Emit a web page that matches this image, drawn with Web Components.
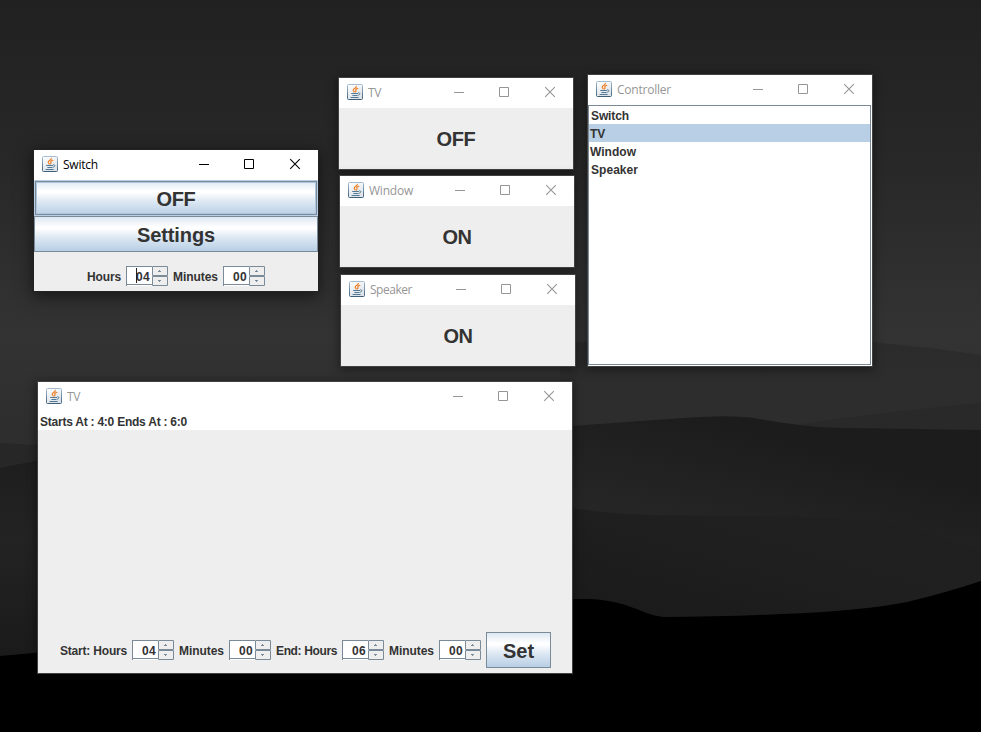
<!DOCTYPE html>
<html lang="en"><head><meta charset="utf-8"><title>Home controller</title>
<style>html,body{margin:0;width:981px;height:732px;overflow:hidden;background:#000}</style></head>
<body>
<home-desktop>
<app-window caption="Switch" active style="left:34px;top:150px;width:284px;height:141px">
<metal-button focused style="height:36px"><fit-text w="39">OFF</fit-text></metal-button><metal-button style="height:36px"><fit-text w="78">Settings</fit-text></metal-button>
<form-row style="padding:14px 0 0 53px"><fit-text w="34">Hours</fit-text><metal-spinner caret>04</metal-spinner><fit-text w="45">Minutes</fit-text><metal-spinner>00</metal-spinner></form-row>
</app-window>
<app-window caption="TV" style="left:339px;top:78px;width:234px;height:91px"><state-label><fit-text w="39">OFF</fit-text></state-label></app-window>
<app-window caption="Window" style="left:340px;top:176px;width:234px;height:91px"><state-label><fit-text w="29">ON</fit-text></state-label></app-window>
<app-window caption="Speaker" style="left:341px;top:275px;width:234px;height:91px"><state-label><fit-text w="29">ON</fit-text></state-label></app-window>
<app-window caption="Controller" style="left:588px;top:75px;width:284px;height:291px"><device-list items="Switch:38,TV:15,Window:46,Speaker:47" selected="TV"></device-list></app-window>
<app-window caption="TV" style="left:38px;top:382px;width:534px;height:291px">
<status-line><fit-text w="147">Starts At : 4:0 Ends At : 6:0</fit-text></status-line>
<form-row style="padding:202px 0 0 22px"><fit-text w="67">Start: Hours</fit-text><metal-spinner>04</metal-spinner><fit-text w="45">Minutes</fit-text><metal-spinner>00</metal-spinner><fit-text w="61">End: Hours</fit-text><metal-spinner>06</metal-spinner><fit-text w="45">Minutes</fit-text><metal-spinner>00</metal-spinner><metal-button style="width:65px;height:36px"><fit-text w="31">Set</fit-text></metal-button></form-row>
</app-window>
</home-desktop>
<script>
function define(name, html, init) {
  const t = document.createElement('template');
  t.innerHTML = html;
  customElements.define(name, class extends HTMLElement {
    connectedCallback() {
      if (this.shadowRoot) return;
      this.attachShadow({mode: 'open'}).appendChild(t.content.cloneNode(true));
      if (init) init(this, this.shadowRoot);
    }
  });
}
define('home-desktop', `<style>
:host{display:block;position:relative;width:981px;height:732px;overflow:hidden;color:#333;font:bold 12px "Liberation Sans",Arial,sans-serif}
svg{display:block}</style>
<svg width="981" height="732" viewBox="0 0 981 732">
<defs><linearGradient id="sky" x2="0" y2="1"><stop offset="0" stop-color="#212121"/><stop offset=".2" stop-color="#272727"/><stop offset=".46" stop-color="#333"/><stop offset=".58" stop-color="#2e2e2e"/></linearGradient>
<linearGradient id="a" x2="0" y2="1"><stop stop-color="#2b2b2b"/><stop offset=".4" stop-color="#2d2d2d"/><stop offset="1" stop-color="#2d2d2d"/></linearGradient>
<linearGradient id="b" gradientUnits="userSpaceOnUse" x1="700" y1="415" x2="670" y2="530"><stop stop-color="#1c1c1c"/><stop offset="1" stop-color="#262626"/></linearGradient>
<linearGradient id="c" gradientUnits="userSpaceOnUse" x1="700" y1="515" x2="670" y2="620"><stop stop-color="#202020"/><stop offset="1" stop-color="#1b1b1b"/></linearGradient>
<linearGradient id="d" x2="0" y2="1"><stop stop-color="#1e1e1e"/><stop offset=".4" stop-color="#232323"/><stop offset="1" stop-color="#1a1a1a"/></linearGradient></defs>
<rect width="981" height="732" fill="url(#sky)"/>
<path d="M560 342H872L930 348L981 355V450H560Z" fill="url(#a)"/>
<path d="M0 443Q50 447 60 442V500H0Z" fill="#272727"/>
<path d="M802 424Q890 411 981 403V440H802Z" fill="#292929"/>
<path d="M300 440L572 426Q650 420 700 417Q732 415 754 418Q810 428 850 428L981 430V620H300Z" fill="url(#b)"/>
<path d="M300 508H572Q610 514 657 515L813 517Q865 518 888 522C930 530 950 541 981 550V660H300Z" fill="url(#c)"/>
<path d="M0 468L45 459H300V660H0Z" fill="url(#d)"/>
<path d="M0 656L45 652L572 599H590C630 601 640 614 663 617Q725 617 782 614Q860 611 907 602Q945 593 981 581V732H0Z" fill="#000"/>
</svg><slot></slot>`);
define('java-icon', `<style>:host{display:block;width:16px;height:16px}svg{display:block}</style>
<svg width="16" height="16" viewBox="0 0 16 16"><defs><linearGradient id="f" x2="0" y2="1"><stop stop-color="#a5bdd2"/><stop offset="1" stop-color="#3f6079"/></linearGradient><linearGradient id="g" x2=".4" y2="1"><stop stop-color="#fff"/><stop offset="1" stop-color="#dde3e8"/></linearGradient></defs>
<rect x=".5" y=".5" width="15" height="15" rx="1" fill="url(#g)" stroke="url(#f)" stroke-width="1"/>
<g fill="none" stroke-linecap="round"><path d="M9.300 2.300C9.700 4 6.100 4.500 6.200 6.300C6.300 7 7 7.300 7.200 8M10.900 4.300C9 4.900 8.300 5.500 8.900 6.300C9.300 7 9 7.600 8.400 8" stroke="#ee7d20" stroke-width="1.15"/>
<path d="M4.600 9.500H10.600M5.800 11.500H10.200M11.600 8.700C13.600 8.700 13.200 10.700 11.500 11.100M4 13.500H11.200" stroke="#527995" stroke-width="1"/></g></svg>`);
define('window-controls', `<style>:host{display:block;margin-left:auto}svg{display:block}</style>
<svg width="119" height="30" viewBox="0 0 119 30" fill="none" stroke="currentColor"><path d="M0 14.500H10M45.500 9.500h9v9h-9z"/><path d="M91.200 9.200l9.600 9.600M100.800 9.200l-9.600 9.600" stroke-width="1.1"/></svg>`);
define('app-window', `<style>
:host{position:absolute;display:flex;flex-direction:column;background:#eee;box-shadow:0 0 0 1px #414141,0 2px 9px 2px rgba(0,0,0,.4)}
:host([active]){box-shadow:0 0 0 1px #222,0 4px 15px 2px rgba(0,0,0,.5)}
header{display:flex;flex:none;height:30px;box-sizing:border-box;padding-left:8px;background:#fff;color:#969696}
:host([active]) header{color:#000}
java-icon{margin:6px 5px 0 0}
.cap{font:12px/30px "Open Sans","Noto Sans",sans-serif}
main{flex:1;min-height:0;display:flex;flex-direction:column}</style>
<header><java-icon></java-icon><span class="cap"></span><window-controls></window-controls></header><main><slot></slot></main>`, (el, r) => {
  const cap = el.getAttribute('caption'), widths = {Switch: 35, TV: 13, Window: 44, Speaker: 42, Controller: 54};
  const f = document.createElement('fit-text');
  f.textContent = cap; f.setAttribute('w', widths[cap]);
  r.querySelector('.cap').append(f);
});
define('metal-button', `<style>
:host{display:flex;flex:none;align-items:center;justify-content:center;box-sizing:border-box;border:1px solid #7a8a99;background:linear-gradient(#dde8f3 0,#fff 30%,#fff 34%,#dde8f3 60%,#b8cfe5 100%);font-size:20px;line-height:24px;padding-top:2px}
:host([focused]){border:1px solid #b8cfe5;outline:1px solid #7a8a99;outline-offset:-2px;box-shadow:inset 0 0 0 2px #b0c6dd}</style><slot></slot>`);
define('state-label', `<style>:host{display:flex;flex:1;align-items:center;justify-content:center;font-size:20px;line-height:24px}</style><slot></slot>`);
define('form-row', `<style>:host{display:flex;align-items:center;gap:5px;line-height:22px}::slotted(fit-text){height:20px}</style><slot></slot>`);
define('metal-spinner', `<style>
:host{display:flex;flex:none;width:42px;height:20px;box-sizing:border-box;background:#fff;position:relative}
.field{box-sizing:border-box;width:26px;height:20px;border:1px solid #7a8a99;border-right:0;border-bottom:0;padding-right:2px;text-align:right;line-height:20px;box-shadow:inset 0 -1px #fff,inset 0 -2px #7a8a99;letter-spacing:.3px}
.arrows{width:16px}svg{display:block}
i{display:none;position:absolute;left:10px;top:2px;width:1px;height:15px;background:#222}:host([caret]) i{display:block}</style>
<div class="field"><slot></slot></div><div class="arrows"><svg width="16" height="20" viewBox="0 0 16 20"><path d="M.5.500h15v9H.500zM.5 10.500h15v9H.500z" fill="#eee" stroke="#7a8a99"/><path d="M6 6h3V5H8V4H7v1H6zM6 14h3v1H8v1H7v-1H6z" fill="#7a8a99"/></svg></div><i></i>`);
define('status-line', `<style>:host{display:block;flex:none;height:18px;background:#fff;padding-left:2px;line-height:20px}</style><slot></slot>`);
define('device-list', `<style>:host{display:block;flex:1;box-sizing:border-box;background:#fff;border:1px solid #7a8a99;margin:0 1px 1px 0;box-shadow:1px 1px #fff}
div{height:18px;line-height:20px;padding-left:2px}.sel{background:#b8cfe5}.near{padding-left:1px}</style>`, (el, r) => {
  for (const it of el.getAttribute('items').split(',')) {
    const [n, w] = it.split(':'), d = document.createElement('div'), f = document.createElement('fit-text');
    if (n === el.getAttribute('selected')) d.classList.add('sel');
    if (/^[TW]/.test(n)) d.classList.add('near');
    f.textContent = n; f.setAttribute('w', w); d.append(f); r.append(d);
  }
});
// Label whose letter spacing is adjusted to occupy a fixed advance width.
// Registered last, so that its containers already supply the inherited font.
define('fit-text', `<style>:host{display:inline-block;white-space:pre;flex:none}span{display:inline-block}</style><span><slot></slot></span>`, (el, r) => {
  const s = r.querySelector('span'), w = +el.getAttribute('w');
  if (!w) return;
  el.style.width = w + 'px';
  s.style.letterSpacing = ((w - s.getBoundingClientRect().width) / el.textContent.length) + 'px';
});
</script></body></html>
